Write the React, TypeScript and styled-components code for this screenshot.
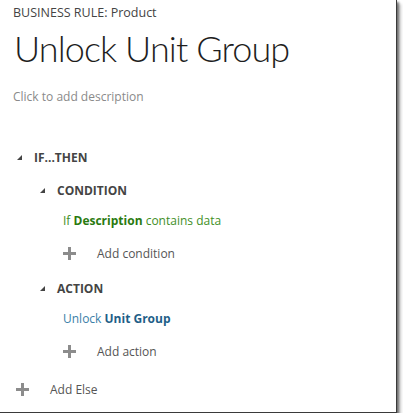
import React from "react";
import styled, { createGlobalStyle } from "styled-components";

const Global = createGlobalStyle`
  html, body { margin: 0; padding: 0; background: #ffffff; }
  body { font-family: "Open Sans", "Noto Sans", sans-serif; }
`;

const Panel = styled.div`
  width: 397px;
  height: 413px;
  box-sizing: border-box;
  background: #fff;
  border-right: 1px solid #3a3a3a;
  border-bottom: 1px solid #3a3a3a;
  box-shadow: 2px 2px 2px rgba(0, 0, 0, 0.45), 4px 4px 3px rgba(0, 0, 0, 0.2);
  padding: 4px 0 0 13px;
  display: flex;
  flex-direction: column;
`;

const Kicker = styled.div`
  font-size: 12.5px;
  color: #444;
  line-height: 18px;
`;

const Title = styled.h1`
  margin: 4px 0 0 1px;
  font-family: "Lato", "Open Sans", sans-serif;
  font-weight: 300;
  font-size: 36px;
  line-height: 44px;
  letter-spacing: -0.9px;
  color: #1e1e1e;
`;

const Description = styled.div`
  margin-top: 18px;
  font-size: 12px;
  color: #8a8a8a;
  line-height: 18px;
`;

const Tree = styled.div`
  margin-top: 42px;
  display: flex;
  flex-direction: column;
`;

const Header = styled.div<{ $indent: number }>`
  display: flex;
  align-items: center;
  height: 18px;
  padding-left: ${(p) => p.$indent}px;
  font-size: 12px;
  font-weight: 700;
  color: #444;
`;

const Caret = styled.span`
  width: 0;
  height: 0;
  border-left: 5px solid transparent;
  border-bottom: 5px solid #444;
  margin-right: 12px;
`;

const Section = styled.div<{ $top: number }>`
  margin-top: ${(p) => p.$top}px;
  display: flex;
  flex-direction: column;
`;

const Clause = styled.div<{ $tone: "green" | "blue" }>`
  margin-top: 13px;
  padding-left: 50px;
  font-size: 12px;
  line-height: 18px;
  color: ${(p) => (p.$tone === "green" ? "#3f8f1f" : "#3a80a8")};
  b {
    font-weight: 700;
    color: ${(p) => (p.$tone === "green" ? "#2a7a10" : "#1f5f88")};
  }
`;

const AddRow = styled.div<{ $indent: number; $top: number }>`
  display: flex;
  align-items: center;
  margin-top: ${(p) => p.$top}px;
  padding-left: ${(p) => p.$indent}px;
  height: 18px;
  font-size: 12px;
  color: #555;
`;

const Plus = styled.span`
  position: relative;
  width: 13px;
  height: 13px;
  margin-right: 21px;
  &::before,
  &::after {
    content: "";
    position: absolute;
    background: #8c8c8c;
  }
  &::before {
    left: 0;
    top: 5px;
    width: 13px;
    height: 3px;
  }
  &::after {
    left: 5px;
    top: 0;
    width: 3px;
    height: 13px;
  }
`;

export default function App() {
  return (
    <>
      <Global />
      <Panel>
        <Kicker>BUSINESS RULE: Product</Kicker>
        <Title>Unlock Unit Group</Title>
        <Description>Click to add description</Description>
        <Tree>
          <Header $indent={4}>
            <Caret />
            IF...THEN
          </Header>
          <Section $top={15}>
            <Header $indent={27}>
              <Caret />
              CONDITION
            </Header>
            <Clause $tone="green">
              If <b>Description</b> contains data
            </Clause>
            <AddRow $indent={50} $top={14}>
              <Plus />
              Add condition
            </AddRow>
          </Section>
          <Section $top={17}>
            <Header $indent={27}>
              <Caret />
              ACTION
            </Header>
            <Clause $tone="blue">
              Unlock <b>Unit Group</b>
            </Clause>
            <AddRow $indent={50} $top={14}>
              <Plus />
              Add action
            </AddRow>
          </Section>
          <AddRow $indent={3} $top={20}>
            <Plus />
            Add Else
          </AddRow>
        </Tree>
      </Panel>
    </>
  );
}
